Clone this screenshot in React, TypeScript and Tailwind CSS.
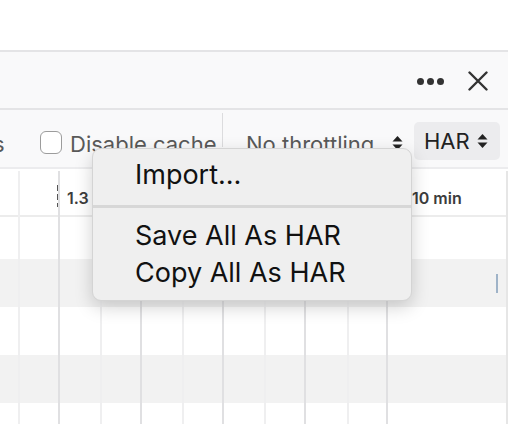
const LINES = [
  { x: 18, dark: false },
  { x: 58, dark: true },
  { x: 100, dark: false },
  { x: 140, dark: true },
  { x: 182, dark: false },
  { x: 222, dark: true },
  { x: 264, dark: false },
  { x: 304, dark: true },
  { x: 347, dark: false },
  { x: 386, dark: true },
];

function UpDown({ className = '' }: { className?: string }) {
  return (
    <svg width="11" height="18" viewBox="0 0 11 18" className={className}>
      <path d="M5.5 2 L10.5 7.5 H0.5 Z" fill="currentColor" />
      <path d="M5.5 16 L10.5 10.5 H0.5 Z" fill="currentColor" />
    </svg>
  );
}

export default function App() {
  return (
    <div className="relative w-[508px] h-[424px] overflow-hidden bg-white font-['Inter',sans-serif] text-[#222]">
      <div className="h-[52px] bg-white border-b-2 border-[#e4e4e6]" />

      {/* top toolbar */}
      <div className="h-[58px] bg-[#f9f9fa] border-b-2 border-[#e4e4e6] flex items-center justify-end pr-[20px] gap-[24px] pt-[2px]">
        <div className="flex items-center gap-[3px]">
          <span className="w-[7px] h-[7px] rounded-full bg-[#333]" />
          <span className="w-[7px] h-[7px] rounded-full bg-[#333]" />
          <span className="w-[7px] h-[7px] rounded-full bg-[#333]" />
        </div>
        <svg width="20" height="20" viewBox="0 0 20 20" className="text-[#333]">
          <path d="M1.5 1.5 L18.5 18.5 M18.5 1.5 L1.5 18.5" stroke="currentColor" strokeWidth="2.4" strokeLinecap="round" />
        </svg>
      </div>

      {/* filter toolbar */}
      <div className="h-[59px] bg-[#f9f9fa] border-b-2 border-[#ececee] flex items-center pt-[8px] text-[22px] text-[#595959]">
        <span className="-ml-[7px] w-[47px] pt-[3px]">s</span>
        <div className="w-[22px] h-[23px] rounded-[6px] border-[1.5px] border-[#9c9c9c] bg-white" />
        <span className="ml-[8px] w-[152px] pt-[3px] whitespace-nowrap">Disable cache</span>
        <div className="w-px h-[34px] bg-[#dcdcde] self-start -mt-[5px]" />
        <span className="ml-[23px] w-[146px] pt-[3px] whitespace-nowrap">No throttling</span>
        <UpDown className="text-[#222]" />
        <div className="ml-[11px] mb-[4px] h-[38px] w-[86px] rounded-[5px] bg-[#ececee] flex items-center pl-[10px] text-[#222] text-[22px]">
          <span className="pt-[2px]">HAR</span>
          <UpDown className="ml-[7px]" />
        </div>
      </div>

      {/* timeline header */}
      <div className="h-[48px] border-b-2 border-[#ececec] relative text-[16px] font-semibold text-[#3c3c3c]">
        <span className="absolute left-[67px] top-[19px] leading-[20px]">1.3</span>
        <span className="absolute left-[412px] top-[19px] leading-[20px]">10 min</span>
        <div className="absolute left-[57px] top-[16px] h-[22px] w-[2px] bg-[repeating-linear-gradient(to_bottom,#555_0_6px,transparent_6px_9px)]" />
      </div>

      {/* rows */}
      <div className="flex flex-col">
        <div className="h-[42px] bg-white relative">
          <div className="absolute right-0 top-[20px] w-[1.5px] h-[5px] bg-[#b0b0b0]" />
        </div>
        <div className="h-[48px] bg-[#f2f2f2] relative">
          <div className="absolute left-[496px] top-[15px] w-[1.5px] h-[19px] bg-[#9fb3c8]" />
        </div>
        <div className="h-[48px] bg-white" />
        <div className="h-[48px] bg-[#f2f2f2]" />
        <div className="h-[48px] bg-white" />
      </div>

      {/* grid lines */}
      {LINES.map(l => (
        <div
          key={l.x}
          className={`absolute top-[171px] bottom-0 w-[2px] ${l.dark ? 'bg-[#e0e0e2]' : 'bg-[#efeff0]'}`}
          style={{ left: l.x }}
        />
      ))}
      <div className="absolute top-[171px] bottom-0 right-0 w-[2px] bg-[#e6e6e6]" />

      {/* menu */}
      <div className="absolute left-[92px] top-[148px] w-[320px] h-[153px] rounded-[9px] bg-[#efefef] border border-[#d4d4d4] shadow-[0_6px_18px_rgba(0,0,0,0.18)] text-[27px] leading-[37px] text-[#111] flex flex-col">
        <div className="h-[56px] pl-[42px] pt-[7px]">Import…</div>
        <div className="h-[3px] bg-[#d7d7d7]" />
        <div className="pl-[42px] pt-[9px]">Save All As HAR</div>
        <div className="pl-[42px]">Copy All As HAR</div>
      </div>
    </div>
  );
}
